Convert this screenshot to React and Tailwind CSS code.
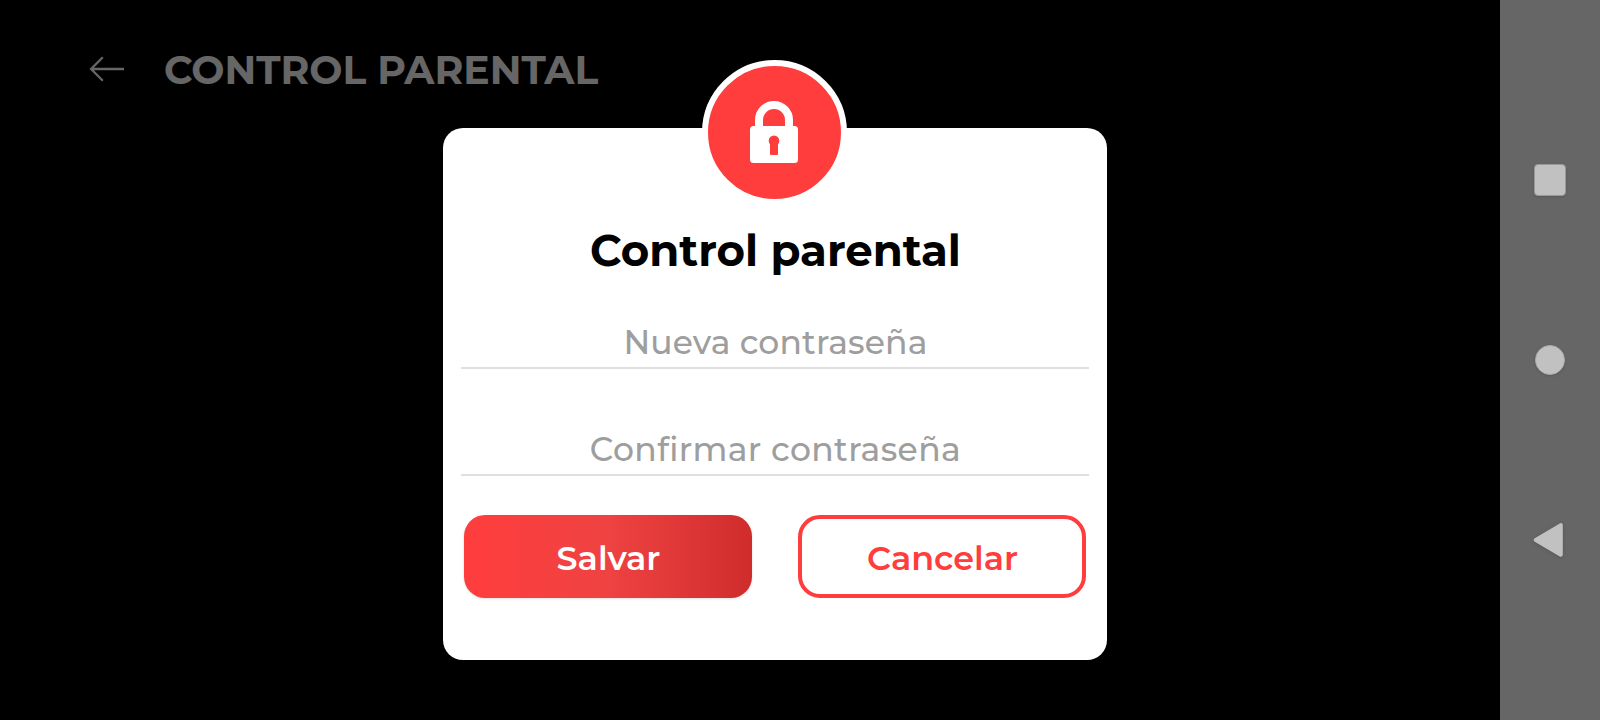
import React, { useState } from 'react';

function ArrowIcon() {
  return (
    <svg width="36" height="26" viewBox="0 0 36 26" fill="none" stroke="currentColor" strokeWidth="2.3">
      <path d="M35 13H2M13.8 1.2L2.1 13l11.7 11.8" />
    </svg>
  );
}

function LockIcon() {
  return (
    <svg width="48" height="62" viewBox="0 0 48 62">
      <path d="M9 30V19a15 15 0 0 1 30 0v11" fill="none" stroke="#fff" strokeWidth="8" />
      <rect y="25" width="48" height="37" rx="3.5" fill="#fff" />
      <circle cx="24" cy="39.8" r="5.3" fill="#ff3d3d" />
      <rect x="20" y="41" width="8" height="13" rx="1" fill="#ff3d3d" />
    </svg>
  );
}

function PasswordField({ label, className }) {
  const [value, setValue] = useState('');

  return (
    <div className="flex h-[58px] justify-center border-b-2 border-[#e0e0e0]">
      <input
        type="password"
        placeholder={label}
        value={value}
        onChange={(e) => setValue(e.target.value)}
        className={`w-full bg-transparent pt-[6px] pl-[1px] text-center text-[33px] leading-[40px] font-medium outline-none placeholder:text-[#9e9e9e] ${className}`}
      />
    </div>
  );
}

function ParentalDialog() {
  return (
    <div className="relative flex h-[532px] w-[664px] flex-col rounded-[20px] bg-white px-[18px] pt-[94px]">
      {/* badge over the top edge */}
      <div className="absolute -top-[68px] left-[259px] flex h-[145px] w-[145px] items-center justify-center rounded-full border-6 border-white bg-[#ff3d3d] pr-[1px] pb-[2px]">
        <LockIcon />
      </div>
      <h2 className="pl-[1px] text-center text-[43.5px] leading-[58px] font-bold text-black">Control parental</h2>
      <div className="mt-[31px]">
        <PasswordField label="Nueva contraseña" className="tracking-[0.15px]" />
      </div>
      <div className="mt-[49px]">
        <PasswordField label="Confirmar contraseña" className="tracking-[0.37px]" />
      </div>
      <div className="mt-[39px] flex justify-between px-[3px] text-[33.4px] font-semibold">
        <button className="h-[83px] w-[288px] rounded-[21px] bg-linear-to-r from-[#ff3d3d] via-[#ef4242] to-[#d02c2c] pt-1 pl-[1px] text-white shadow">
          Salvar
        </button>
        <button className="h-[83px] w-[288px] rounded-[22px] border-4 border-[#ff3d3d] bg-white pt-1 pl-[1px] text-[#ff3d3d]">
          Cancelar
        </button>
      </div>
    </div>
  );
}

function SystemNav() {
  return (
    <nav className="flex w-[100px] flex-col items-center justify-center gap-[148px] bg-[#666]">
      <div className="flex h-8 items-center">
        <div className="h-[32px] w-[32px] rounded-[4px] border border-[#999] bg-[#c1c1c1] shadow" />
      </div>
      <div className="flex h-8 items-center">
        <div className="h-[30px] w-[30px] rounded-full border border-[#aaa] bg-[#c1c1c1] shadow" />
      </div>
      <svg className="drop-shadow" width="34" height="32" viewBox="0 0 34 32" overflow="visible">
        <path
          d="M2.8 16L27.8 1.2v29.6z"
          fill="#c1c1c1"
          stroke="#c1c1c1"
          strokeWidth="4"
          strokeLinejoin="round"
        />
      </svg>
    </nav>
  );
}

export default function App() {
  return (
    <div className="flex h-[720px] w-[1600px] overflow-hidden bg-black font-['Montserrat','Inter',sans-serif]">
      <main className="relative flex-1">
        <header className="flex h-[138px] items-center pl-[89px] text-white">
          <ArrowIcon />
          <h1 className="ml-[39px] pt-[3px] text-[39.3px] font-bold whitespace-nowrap">CONTROL PARENTAL</h1>
        </header>
        <div className="absolute inset-0 flex bg-black/60 pt-32 pl-[443px]">
          <ParentalDialog />
        </div>
      </main>
      <SystemNav />
    </div>
  );
}
